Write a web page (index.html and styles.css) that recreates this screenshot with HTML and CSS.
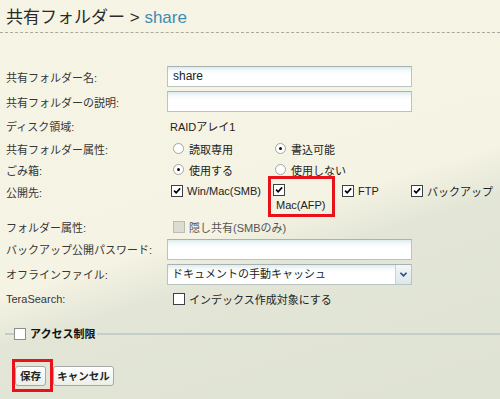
FILE: index.html
```html
<!DOCTYPE html>
<html lang="ja">
<head>
<meta charset="utf-8">
<title>共有フォルダー</title>
<link rel="stylesheet" href="styles.css">
</head>
<body>
<div class="page">
  <h1 class="title">共有フォルダー &gt; <span class="crumb">share</span></h1>

  <div class="form">
    <div class="label r-in">共有フォルダー名:</div>
    <div class="val r-in"><span class="textbox">share</span></div>

    <div class="label r-in">共有フォルダーの説明:</div>
    <div class="val r-in"><span class="textbox"></span></div>

    <div class="label r-disk">ディスク領域:</div>
    <div class="val r-disk"><span class="plain">RAIDアレイ1</span></div>

    <div class="label r-line">共有フォルダー属性:</div>
    <div class="val r-line opts">
      <span class="opt w-wide"><span class="radio"></span>読取専用</span>
      <span class="opt"><span class="radio on"></span>書込可能</span>
    </div>

    <div class="label r-line">ごみ箱:</div>
    <div class="val r-line opts">
      <span class="opt w-wide"><span class="radio on"></span>使用する</span>
      <span class="opt"><span class="radio"></span>使用しない</span>
    </div>

    <div class="label r-pub">公開先:</div>
    <div class="val r-pub pubs">
      <span class="opt w-wide"><span class="cb on"><svg viewBox="0 0 12 12"><path d="M2.5 5.5 L5 8.2 L9.8 2.8"/></svg></span>Win/Mac(SMB)</span>
      <span class="opt stack w-narrow">
        <span class="cb on"><svg viewBox="0 0 12 12"><path d="M2.5 5.5 L5 8.2 L9.8 2.8"/></svg></span>
        <span class="stack-text">Mac(AFP)</span>
        <span class="redmark afp"></span>
      </span>
      <span class="opt w-narrow"><span class="cb on"><svg viewBox="0 0 12 12"><path d="M2.5 5.5 L5 8.2 L9.8 2.8"/></svg></span>FTP</span>
      <span class="opt"><span class="cb on"><svg viewBox="0 0 12 12"><path d="M2.5 5.5 L5 8.2 L9.8 2.8"/></svg></span>バックアップ</span>
    </div>

    <div class="label r-fattr">フォルダー属性:</div>
    <div class="val r-fattr opts">
      <span class="opt disabled"><span class="cb off"></span>隠し共有(SMBのみ)</span>
    </div>

    <div class="label r-in2">バックアップ公開パスワード:</div>
    <div class="val r-in2"><span class="textbox"></span></div>

    <div class="label r-sel">オフラインファイル:</div>
    <div class="val r-sel">
      <span class="select">
        <span class="select-text">ドキュメントの手動キャッシュ</span>
        <span class="select-btn"><svg viewBox="0 0 10 8"><path d="M1.5 2 L5 5.5 L8.5 2"/></svg></span>
      </span>
    </div>

    <div class="label r-ts">TeraSearch:</div>
    <div class="val r-ts opts">
      <span class="opt"><span class="cb"></span>インデックス作成対象にする</span>
    </div>
  </div>

  <fieldset class="access">
    <legend class="access-legend"><span class="cb"></span>アクセス制限</legend>
  </fieldset>

  <div class="buttons">
    <span class="save-wrap">
      <button class="btn btn-save" type="button">保存</button>
      <span class="redmark save"></span>
    </span>
    <button class="btn btn-cancel" type="button">キャンセル</button>
  </div>
</div>
</body>
</html>
```

FILE: styles.css
```css
html, body {
  margin: 0;
  padding: 0;
}

body {
  width: 500px;
  height: 399px;
  overflow: hidden;
  background: linear-gradient(163deg, #f6f4e4 0%, #f5f3e3 54%, #e3e6d7 63%, #dfe3d4 100%);
  font-family: "Liberation Sans", "Noto Sans CJK JP", sans-serif;
  font-size: 11px;
  color: #222;
}

.page {
  padding-top: 8px;
}

.title {
  margin: 0;
  padding: 0 0 4px 6px;
  font-size: 17px;
  line-height: 20px;
  font-weight: normal;
  color: #2a2a2a;
  border-bottom: 1px dashed #a9a9a2;
}

.crumb {
  color: #3d8db3;
}

.form {
  margin-top: 31px;
  display: grid;
  grid-template-columns: 161px 1fr;
  grid-template-rows: 25px 25px 24px 21px 21px 38px 18px 26px 24px 26px;
  padding-left: 6px;
}

.label {
  display: flex;
  align-items: center;
  color: #363636;
  white-space: nowrap;
}

.val {
  display: flex;
  align-items: center;
}

.r-pub {
  align-items: flex-start;
}

.r-pub.label {
  padding-top: 4px;
  align-items: flex-start;
}

.textbox {
  box-sizing: border-box;
  width: 245px;
  height: 21px;
  border: 1px solid #b9c3c2;
  border-top-color: #a7b3b3;
  background: linear-gradient(#deeaee 0, #f6fafb 4px, #fff 8px);
  padding: 0 5px;
  line-height: 19px;
  font-size: 12px;
  color: #222;
}

.plain {
  padding-left: 3px;
}

.opts {
  padding-left: 6px;
}

.pubs {
  padding-left: 4px;
  display: flex;
}

.opt {
  display: inline-flex;
  align-items: center;
  white-space: nowrap;
  position: relative;
}

.pubs .opt {
  height: 21px;
}

.w-wide {
  width: 102px;
}

.w-narrow {
  width: 69px;
}

.pubs .stack {
  flex-direction: column;
  align-items: flex-start;
  height: 38px;
}

.stack .cb {
  margin-top: 4px;
}

.stack-text {
  margin-top: 2px;
  margin-left: 3px;
  line-height: 14px;
}

.radio {
  box-sizing: border-box;
  width: 11px;
  height: 11px;
  border-radius: 50%;
  border: 1px solid #a5a5a0;
  background: #fff;
  margin-right: 5px;
  position: relative;
  flex: none;
}

.radio.on::after {
  content: "";
  position: absolute;
  left: 3px;
  top: 3px;
  width: 3px;
  height: 3px;
  border-radius: 50%;
  background: #111;
}

.cb {
  box-sizing: border-box;
  width: 12px;
  height: 12px;
  border: 1px solid #3a4246;
  background: #fff;
  margin-right: 4px;
  flex: none;
  display: inline-flex;
}

.cb svg {
  width: 10px;
  height: 10px;
}

.cb svg path {
  fill: none;
  stroke: #000;
  stroke-width: 2;
}

.cb.off {
  border-color: #b9bcb2;
  background: #dcdcd2;
}

.disabled {
  color: #555;
}

.select {
  box-sizing: border-box;
  width: 245px;
  height: 21px;
  border: 1px solid #b9c3c2;
  border-top-color: #a7b3b3;
  background: linear-gradient(#e2ecef 0, #fafcfc 5px, #fff 9px);
  display: flex;
  align-items: stretch;
}

.select-text {
  flex: 1;
  padding-left: 4px;
  line-height: 19px;
  font-size: 11px;
}

.select-btn {
  width: 15px;
  border-left: 1px solid #c8d3d6;
  background: linear-gradient(#f3f7f8, #dde7ea);
  display: flex;
  align-items: center;
  justify-content: center;
}

.select-btn svg {
  width: 9px;
  height: 7px;
}

.select-btn path {
  fill: none;
  stroke: #2c4f86;
  stroke-width: 2;
}

.access {
  margin: 15px 0 0 5px;
  padding: 0;
  border: 0;
  border-top: 2px solid #c4cccc;
  min-width: 0;
}

.access-legend {
  padding: 0 2px 0 0;
  margin-left: 9px;
  display: flex;
  align-items: center;
  font-weight: bold;
  color: #111;
  font-size: 11px;
  line-height: 14px;
}

.access-legend .cb {
  border-color: #8d8f88;
  margin-right: 4px;
}

.buttons {
  margin-top: 25px;
  padding-left: 15px;
  display: flex;
  gap: 7px;
  align-items: center;
}

.save-wrap {
  position: relative;
  display: inline-flex;
}

.btn {
  box-sizing: border-box;
  height: 20px;
  padding: 0;
  border: 1px solid #a7aaa4;
  border-radius: 3px;
  background: linear-gradient(#ffffff, #eceee8);
  font-family: "Liberation Sans", "Noto Sans CJK JP", sans-serif;
  font-size: 10.5px;
  font-weight: bold;
  color: #222;
  line-height: 18px;
  text-align: center;
}

.btn-save {
  width: 31px;
}

.btn-cancel {
  width: 61px;
}

.redmark {
  position: absolute;
  border: 3px solid #e8121a;
  pointer-events: none;
}

.redmark.afp {
  left: -5px;
  top: -4px;
  width: 61px;
  height: 35px;
}

.redmark.save {
  left: -3px;
  top: -7px;
  width: 35px;
  height: 27px;
}
```
